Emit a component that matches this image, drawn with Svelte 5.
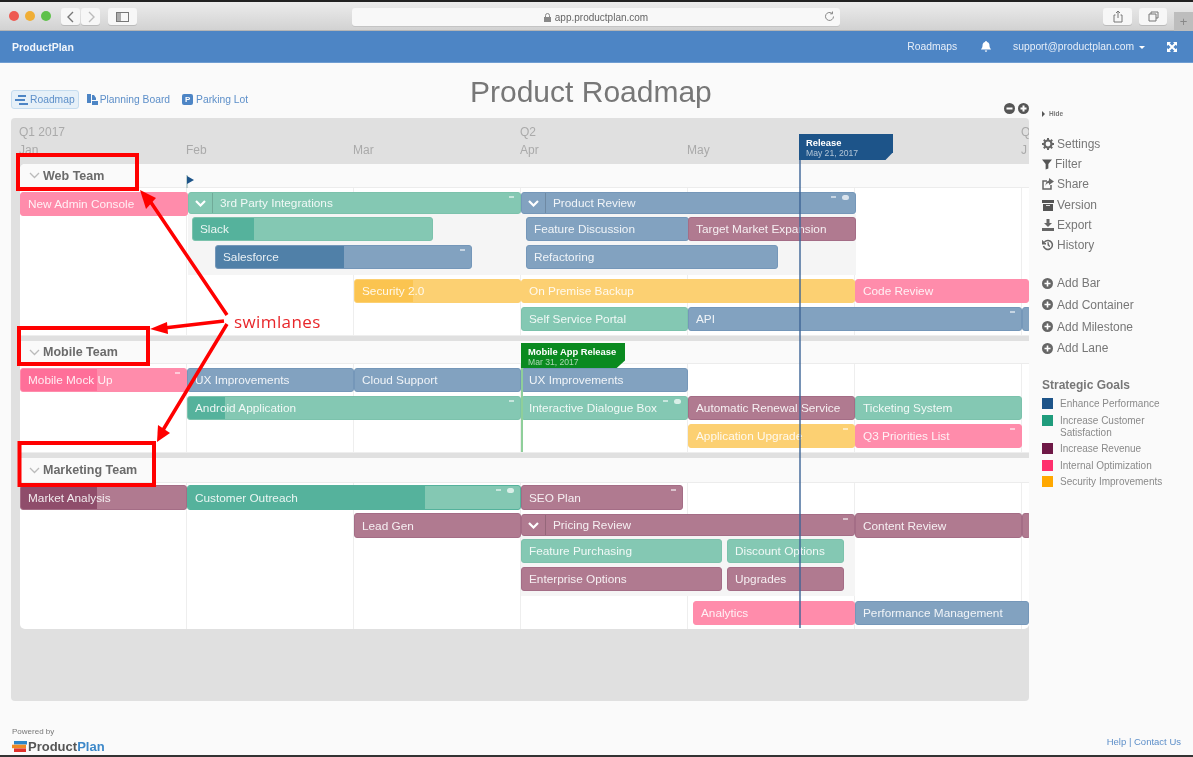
<script>
  const B0 = 20;
  const lanes = [
    { name: 'Web Team', headH: 24, bodyH: 147, top: 188,
      groups: [[188, 521, 214, 275], [521, 856, 214, 275]],
      bars: [
        ['New Admin Console', 20, 188, 192, 24, 'pink'],
        ['3rd Party Integrations', 188, 521, 192, 22, 'teal', 0, 'chev', 'n'],
        ['Slack', 192, 433, 217, 24, 'teal', 253],
        ['Salesforce', 215, 472, 245, 24, 'blue', 343, '', 'n'],
        ['Product Review', 521, 856, 192, 22, 'blue', 0, 'chev', 'nc'],
        ['Feature Discussion', 526, 689, 217, 24, 'blue'],
        ['Target Market Expansion', 688, 856, 217, 24, 'plum'],
        ['Refactoring', 526, 778, 245, 24, 'blue'],
        ['Security 2.0', 354, 521, 279, 24, 'orange', 412],
        ['On Premise Backup', 521, 855, 279, 24, 'orange'],
        ['Code Review', 855, 1029, 279, 24, 'pink'],
        ['Self Service Portal', 521, 688, 307, 24, 'teal'],
        ['API', 688, 1022, 307, 24, 'blue', 0, '', 'n'],
        ['', 1022, 1029, 307, 24, 'blue']
      ] },
    { name: 'Mobile Team', headH: 23, bodyH: 88, top: 364, groups: [],
      bars: [
        ['Mobile Mock Up', 20, 187, 368, 24, 'pink', 96, '', 'n'],
        ['UX Improvements', 187, 354, 368, 24, 'blue'],
        ['Cloud Support', 354, 521, 368, 24, 'blue'],
        ['UX Improvements', 521, 688, 368, 24, 'blue'],
        ['Android Application', 187, 521, 396, 24, 'teal', 224, '', 'n'],
        ['Interactive Dialogue Box', 521, 688, 396, 24, 'teal', 0, '', 'nc'],
        ['Automatic Renewal Service', 688, 855, 396, 24, 'plum'],
        ['Ticketing System', 855, 1022, 396, 24, 'teal'],
        ['Application Upgrade', 688, 855, 424, 24, 'orange', 0, '', 'n'],
        ['Q3 Priorities List', 855, 1022, 424, 24, 'pink', 0, '', 'n']
      ] },
    { name: 'Marketing Team', headH: 25, bodyH: 146, top: 482,
      groups: [[521, 855, 535, 595]],
      bars: [
        ['Market Analysis', 20, 187, 484, 25, 'plum', 96],
        ['Customer Outreach', 187, 521, 484, 25, 'lteal', 424, '', 'nc'],
        ['SEO Plan', 521, 683, 484, 25, 'plum', 0, '', 'n'],
        ['Lead Gen', 354, 521, 512, 25, 'plum'],
        ['Pricing Review', 521, 855, 513, 22, 'plum', 0, 'chev', 'n'],
        ['Content Review', 855, 1022, 512, 25, 'plum'],
        ['', 1022, 1029, 512, 25, 'plum'],
        ['Feature Purchasing', 521, 722, 538, 24, 'teal'],
        ['Discount Options', 727, 844, 538, 24, 'teal'],
        ['Enterprise Options', 521, 722, 566, 24, 'plum'],
        ['Upgrades', 727, 844, 566, 24, 'plum'],
        ['Analytics', 693, 855, 600, 24, 'pink'],
        ['Performance Management', 855, 1029, 600, 24, 'blue']
      ] }
  ];
  const actions = ['Add Bar', 'Add Container', 'Add Milestone', 'Add Lane'];
  const goals = [
    ['Enhance Performance', '#1d5489'],
    ['Increase Customer Satisfaction', '#1f9c7c'],
    ['Increase Revenue', '#6e1846'],
    ['Internal Optimization', '#ff2f6d'],
    ['Security Improvements', '#ffa800']
  ];
</script>

<div class="window">
  <header class="chrome">
    <div class="lights"><i class="red"></i><i class="amber"></i><i class="green"></i></div>
    <div class="btn nav-l"><svg width="10" height="12" viewBox="0 0 10 12"><path d="M7 1 2 6l5 5" fill="none" stroke="#777" stroke-width="1.4"/></svg></div>
    <div class="btn nav-r"><svg width="10" height="12" viewBox="0 0 10 12"><path d="m3 1 5 5-5 5" fill="none" stroke="#bbb" stroke-width="1.4"/></svg></div>
    <div class="btn side"><svg width="13" height="10" viewBox="0 0 13 10"><rect x=".5" y=".5" width="12" height="9" fill="none" stroke="#777"/><rect x="1" y="1" width="4" height="8" fill="#aaa"/></svg></div>
    <div class="url">
      <svg width="7" height="9" viewBox="0 0 7 9"><rect y="4" width="7" height="5" fill="#888"/><path d="M1.500 4V2.500a2 2 0 0 1 4 0V4" fill="none" stroke="#888"/></svg>
      <span>app.productplan.com</span>
      <svg class="reload" width="11" height="11" viewBox="0 0 11 11"><path d="M9.500 5.500a4 4 0 1 1-1.300-3M8.500 .5v2.300H6.200" fill="none" stroke="#888"/></svg>
    </div>
    <div class="btn share"><svg width="10" height="13" viewBox="0 0 10 13"><path d="M2.500 5H1v7h8V5H7.500M5 8V1M3 3l2-2 2 2" fill="none" stroke="#777"/></svg></div>
    <div class="btn tabs"><svg width="11" height="11" viewBox="0 0 11 11"><path d="M3 3V1h7v6H8M1 3h7v7H1z" fill="none" stroke="#777"/></svg></div>
    <div class="plus">+</div>
  </header>

  <nav class="topnav">
    <strong>ProductPlan</strong>
    <span class="roadmaps">Roadmaps</span>
    <svg class="bell" width="10" height="11" viewBox="0 0 10 11"><path d="M5 0a1 1 0 0 1 1 1c2 .5 2.500 2 2.500 4S10 8 10 8.500H0C0 8 1.500 7 1.500 5S2 1.500 4 1a1 1 0 0 1 1-1ZM3.800 9.500h2.400a1.200 1.200 0 0 1-2.400 0Z" fill="#fff"/></svg>
    <span class="email">support@productplan.com</span>
    <span class="caret"></span>
    <svg class="expand" width="10" height="10" viewBox="0 0 10 10"><path d="M1 1l8 8M9 1 1 9" stroke="#fff" stroke-width="2"/><path d="M0 0h4L0 4ZM10 0v4L6 0ZM0 10V6l4 4ZM10 10H6l4-4Z" fill="#fff"/></svg>
  </nav>

  <div class="main">
    <section class="left">
      <div class="toolbar">
        <div class="tabs-row">
          <span class="tab active">
            <svg width="13" height="10" viewBox="0 0 13 10"><path d="M3 1h8M0 5h10M4 9h9" stroke="#4d85c5" stroke-width="2"/></svg>Roadmap
          </span>
          <span class="tab">
            <svg width="11" height="11" viewBox="0 0 11 11"><path d="M0 0h4v9H0ZM5 1h2l2 3v2H5ZM5 7h6v4H5Z" fill="#4d85c5"/></svg>Planning Board
          </span>
          <span class="tab">
            <span class="p">P</span>Parking Lot
          </span>
        </div>
        <h1>Product Roadmap</h1>
        <div class="zoomers">
          <svg width="11" height="11" viewBox="0 0 11 11"><circle cx="5.500" cy="5.500" r="5.500" fill="#555"/><path d="M2.500 5.500h6" stroke="#fff" stroke-width="2"/></svg>
          <svg width="11" height="11" viewBox="0 0 11 11"><circle cx="5.500" cy="5.500" r="5.500" fill="#555"/><path d="M2.500 5.500h6M5.500 2.500v6" stroke="#fff" stroke-width="2"/></svg>
        </div>
      </div>

      <div class="board">
        <div class="timehead">
          <span class="q">Q1 2017</span><span></span><span></span><span class="q">Q2</span><span></span><span></span><span class="q">Q</span>
          <span>Jan</span><span>Feb</span><span>Mar</span><span>Apr</span><span>May</span><span></span><span>J</span>
        </div>

        <div class="lanes">
          {#each lanes as lane, i}
            {#if i > 0}<div class="sep"></div>{/if}
            <div class="lanehead" style="height:{lane.headH}px">
              <svg width="11" height="7" viewBox="0 0 11 7"><path d="m1 1 4.500 4.500L10 1" fill="none" stroke="#bbb" stroke-width="1.300"/></svg>
              <b>{lane.name}</b>
            </div>
            <div class="lanebody" style="height:{lane.bodyH}px">
              {#each lane.groups as g}
                <div class="group" style="left:{g[0] - B0}px;width:{g[1] - g[0]}px;top:{g[2] - lane.top}px;height:{g[3] - g[2]}px"></div>
              {/each}
              {#each lane.bars as b}
                <div class="bar {b[5]}" style="left:{b[1] - B0}px;width:{b[2] - b[1]}px;top:{b[3] - lane.top}px;height:{b[4]}px">
                  {#if b[6]}<span class="prog" style="width:{b[6] - b[1]}px"></span>{/if}
                  {#if b[7] === 'chev'}
                    <span class="chev"><svg width="11" height="7" viewBox="0 0 11 7"><path d="m1 1 4.500 4.500L10 1" fill="none" stroke="#fff" stroke-width="2.200"/></svg></span>
                  {/if}
                  <span class="label">{b[0]}</span>
                  {#if b[8]}
                    <span class="marks">
                      <i class="dash"></i>
                      {#if b[8] === 'nc'}<i class="bubble"></i>{/if}
                    </span>
                  {/if}
                </div>
              {/each}
            </div>
          {/each}
        </div>

        <svg class="tinyflag" width="9" height="13" viewBox="0 0 9 13"><path d="M1 0v13" stroke="#8aa" /><path d="M1 1l7 4-7 4Z" fill="#1d5489"/></svg>
        <div class="ms-line release-line"></div>
        <div class="flag release"><b>Release</b><small>May 21, 2017</small></div>
        <div class="ms-line mobile-line"></div>
        <div class="flag mobile"><b>Mobile App Release</b><small>Mar 31, 2017</small></div>
      </div>
    </section>

    <aside class="side-panel">
      <div class="hide"><span class="tri"></span>Hide</div>
      <ul class="menu">
        <li><svg width="12" height="12" viewBox="0 0 12 12"><circle cx="6" cy="6" r="3.500" fill="none" stroke="#666" stroke-width="2.200"/><path d="M6 0v2M6 10v2M0 6h2M10 6h2M1.800 1.800l1.400 1.400M8.800 8.800l1.400 1.400M10.200 1.800 8.800 3.200M3.200 8.800l-1.400 1.400" stroke="#666" stroke-width="2"/></svg>Settings</li>
        <li><svg width="10" height="12" viewBox="0 0 11 12"><path d="M0 1h11L7 6v5L4 12V6Z" fill="#555"/></svg>Filter</li>
        <li><svg width="12" height="12" viewBox="0 0 12 12"><path d="M9 7v4H1V3h4" fill="none" stroke="#666" stroke-width="1.500"/><path d="M7 0l5 3.500L7 7V5C5 5 4 6 3.500 8c0-3 1-5 3.500-5.500Z" fill="#666"/></svg>Share</li>
        <li><svg width="12" height="12" viewBox="0 0 12 12"><path d="M0 1h12v3H0ZM1 5h10v7H1Z" fill="#555"/><path d="M4 6.500h4" stroke="#ddd"/></svg>Version</li>
        <li><svg width="12" height="12" viewBox="0 0 12 12"><path d="M4.500 0h3v4H10L6 8 2 4h2.500ZM0 9h12v3H0Z" fill="#666"/></svg>Export</li>
        <li><svg width="12" height="12" viewBox="0 0 12 12"><path d="M2.500 3a4.500 4.500 0 1 1-1 4" fill="none" stroke="#666" stroke-width="1.500"/><path d="M0 1.500 4 5H0ZM6 3v3.500l2 1" fill="#666" stroke="#666"/></svg>History</li>
      </ul>
      <ul class="menu adds">
        {#each actions as a}
          <li><svg width="11" height="11" viewBox="0 0 11 11"><circle cx="5.500" cy="5.500" r="5.500" fill="#666"/><path d="M2.500 5.500h6M5.500 2.500v6" stroke="#fff" stroke-width="1.600"/></svg>{a}</li>
        {/each}
      </ul>
      <h2>Strategic Goals</h2>
      <ul class="legend">
        {#each goals as g}
          <li><i style="background:{g[1]}"></i><span>{g[0]}</span></li>
        {/each}
      </ul>
    </aside>
  </div>

  <footer class="foot">
    <div class="powered">
      <small>Powered by</small>
      <div class="logo">
        <svg width="15" height="11" viewBox="0 0 15 11"><rect x="2" y="0" width="13" height="3.500" fill="#2d86c9"/><rect x="0" y="3.700" width="14" height="3.500" fill="#f08a24"/><rect x="2" y="7.400" width="12" height="3.600" fill="#e0322c"/></svg>
        <span class="prod">Product</span><span class="plan">Plan</span>
      </div>
    </div>
    <div class="help">Help | Contact Us</div>
  </footer>

  <svg class="notes" width="1193" height="757" viewBox="0 0 1193 757" aria-hidden="true">
    <g fill="none" stroke="#f00" stroke-width="4">
      <rect x="18" y="155" width="119" height="34"/>
      <rect x="19" y="328" width="129" height="36"/>
      <rect x="19.500" y="443" width="134.500" height="42"/>
      <path d="M227 315 150 201M224 321l-60 7M227 324l-64 106" stroke-width="3.500"/>
    </g>
    <g fill="#f00">
      <path d="m140 190 16 8-10 11Z"/>
      <path d="m150 329 17-7 1 12Z"/>
      <path d="m157 442 1-17 12 8Z"/>
    </g>
    <text x="234" y="328" class="swim">swimlanes</text>
  </svg>
</div>

<style>
  :global(body) { margin: 0; background: #fff; }
  .window {
    position: relative;
    width: 1193px;
    height: 757px;
    overflow: hidden;
    display: flex;
    flex-direction: column;
    background: #fafafa;
    font-family: "Liberation Sans", Arial, sans-serif;
    filter: blur(0.5px);
  }
  ul { list-style: none; margin: 0; padding: 0; }

  .chrome {
    position: relative;
    box-sizing: border-box;
    height: 31px;
    border-top: 2px solid #222;
    border-bottom: 1px solid #b5b5b5;
    background: linear-gradient(#ececec, #d2d2d2);
    flex: none;
  }
  .lights { position: absolute; left: 9px; top: 9px; display: flex; gap: 6px; }
  .lights i { width: 10px; height: 10px; border-radius: 50%; }
  .red { background: #ee5a52; }
  .amber { background: #f0ae35; }
  .green { background: #5fc14a; }
  .btn {
    position: absolute;
    top: 6px;
    height: 17px;
    background: #f7f7f7;
    border-radius: 3px;
    display: flex;
    align-items: center;
    justify-content: center;
    box-shadow: 0 1px 0 #bbb;
  }
  .nav-l { left: 61px; width: 19px; }
  .nav-r { left: 81px; width: 19px; }
  .side { left: 108px; width: 29px; }
  .share { left: 1103px; width: 29px; }
  .tabs { left: 1139px; width: 28px; }
  .url {
    position: absolute;
    left: 352px;
    top: 6px;
    width: 488px;
    height: 18px;
    background: #f8f8f8;
    border-radius: 3px;
    box-shadow: 0 1px 0 #c4c4c4;
    display: flex;
    align-items: center;
    justify-content: center;
    gap: 4px;
    font-size: 10px;
    color: #666;
  }
  .reload { position: absolute; right: 5px; top: 3px; }
  .plus {
    position: absolute;
    left: 1174px;
    top: 10px;
    width: 19px;
    height: 19px;
    background: #bdbdbd;
    color: #888;
    font-size: 13px;
    line-height: 19px;
    text-align: center;
  }

  .topnav {
    position: relative;
    height: 32px;
    flex: none;
    background: #4d85c5;
    color: #fff;
    font-size: 10.300px;
    display: flex;
    align-items: center;
    padding: 0 16px 0 12px;
    border-bottom: 1px solid #6f9dd2;
    box-sizing: border-box;
  }
  .topnav strong { font-size: 10.500px; margin-right: auto; color: #f2f6fb; }
  .roadmaps { color: #e6eef8; }
  .bell { margin: 0 22px 0 24px; }
  .email { color: #e6eef8; }
  .caret {
    margin: 2px 0 0 5px;
    border: 3px solid transparent;
    border-top-color: #fff;
    border-bottom: 0;
  }
  .expand { margin-left: 22px; }

  .main { flex: 1; display: flex; min-height: 0; }
  .left { width: 1018px; margin-left: 11px; flex: none; display: flex; flex-direction: column; }

  .toolbar { height: 55px; flex: none; display: flex; align-items: flex-end; position: relative; }
  .tabs-row { width: 459px; flex: none; display: flex; align-items: center; font-size: 10.300px; color: #5d8fc9; margin-bottom: 9px; }
  .tab { display: flex; align-items: center; gap: 2px; height: 17px; margin-right: 12px; }
  .tab.active {
    background: #e6f0f8;
    border: 1px solid #c5dcef;
    border-radius: 3px;
    padding: 0 3px;
    margin-right: 8px;
  }
  .p {
    width: 11px;
    height: 11px;
    background: #4d85c5;
    color: #fff;
    border-radius: 2px;
    font-size: 8px;
    font-weight: 700;
    text-align: center;
    line-height: 11px;
    margin-right: 1px;
  }
  h1 {
    margin: 0 0 8px;
    font-size: 30px;
    font-weight: 400;
    color: #777;
    line-height: 36px;
    white-space: nowrap;
  }
  .zoomers { margin-left: auto; display: flex; gap: 3px; margin-bottom: 4px; }
  .zoomers svg { display: block; }

  .board {
    position: relative;
    height: 583px;
    flex: none;
    background: #e0e0e0;
    border-radius: 4px;
    overflow: hidden;
    box-sizing: border-box;
    padding-left: 9px;
  }
  .timehead {
    height: 46px;
    margin-left: -1px;
    display: grid;
    grid-template-columns: 167px 167px 167px 167px 167px 167px 1fr;
    grid-template-rows: 22px 24px;
    font-size: 12px;
    color: #aaa;
    overflow: hidden;
    box-sizing: border-box;
  }
  .timehead span { line-height: 1; white-space: nowrap; padding-top: 8px; }
  .timehead span:nth-child(n+8) { padding-top: 4px; }

  .lanes { background: #fff; border-radius: 5px 0 5px 5px; overflow: hidden; }
  .sep { height: 5px; background: #e0e0e0; border-top: 1px solid #eee; }
  .lanehead {
    box-sizing: border-box;
    background: #fafafa;
    border-bottom: 1px solid #ececec;
    display: flex;
    align-items: center;
    gap: 3px;
    padding-left: 9px;
    color: #6b6b6b;
    font-size: 12.500px;
  }
  .lanebody {
    position: relative;
    background-image: linear-gradient(to right, transparent 166px, #eeeeee 166px);
    background-size: 167px 100%;
    overflow: hidden;
  }
  .group { position: absolute; background: #f5f5f5; }
  .bar {
    position: absolute;
    box-sizing: border-box;
    display: flex;
    align-items: center;
    padding-left: 7px;
    border-radius: 3px;
    border: 1px solid;
    color: rgba(255, 255, 255, 0.88);
    font-size: 11.800px;
    overflow: hidden;
    white-space: nowrap;
  }
  .label { position: relative; }
  .prog { position: absolute; left: 0; top: 0; bottom: 0; }
  .pink { background: #ff8cab; border-color: #ff8cab; }
  .pink .prog { background: #ff6f99; }
  .teal { background: #84c8b3; border-color: #7cc2ac; }
  .teal .prog { background: #55b29c; }
  .lteal { background: #84c8b3; border-color: #55b29c; }
  .lteal .prog { background: #55b29c; }
  .blue { background: #82a2c0; border-color: #7597b9; }
  .blue .prog { background: #5080a8; }
  .plum { background: #b07a90; border-color: #a46d86; }
  .plum .prog { background: #8f4d6b; }
  .orange { background: #fcd072; border-color: #fcd072; }
  .orange .prog { background: #fbc450; }
  .chev {
    position: relative;
    width: 23px;
    margin: 0 7px 0 -7px;
    align-self: stretch;
    border-right: 1px solid rgba(0, 0, 0, 0.15);
    display: flex;
    align-items: center;
    justify-content: center;
    flex: none;
  }
  .marks { position: absolute; right: 6px; top: 2px; display: flex; gap: 6px; align-items: flex-start; }
  .dash { width: 5px; height: 2px; margin-top: 1px; background: rgba(255, 255, 255, 0.55); }
  .bubble { width: 7px; height: 5px; border-radius: 3px; background: rgba(255, 255, 255, 0.7); }

  .tinyflag { position: absolute; left: 175px; top: 57px; }
  .ms-line { position: absolute; }
  .release-line { left: 788px; top: 16px; width: 2px; height: 494px; background: rgba(60, 100, 150, 0.7); }
  .mobile-line { left: 509.500px; top: 225px; width: 2px; height: 109px; background: #8fcf9a; }
  .flag {
    position: absolute;
    box-sizing: border-box;
    color: #fff;
    padding: 3px 0 0 7px;
    display: flex;
    flex-direction: column;
    clip-path: polygon(0 0, 100% 0, 100% 70%, 92% 100%, 0 100%);
  }
  .flag b { font-size: 9.400px; line-height: 11px; }
  .flag small { font-size: 8.600px; line-height: 11px; opacity: 0.65; }
  .release { left: 788px; top: 16px; width: 94px; height: 26px; background: #1d5489; }
  .mobile { left: 510px; top: 225px; width: 104px; height: 25px; background: #0a8a20; }

  .side-panel { flex: 1; padding-left: 13px; color: #777; font-size: 12px; }
  .hide { height: 71px; padding-top: 47px; box-sizing: border-box; font-size: 6.500px; font-weight: 700; display: flex; align-items: flex-start; gap: 4px; color: #777; line-height: 8px; }
  .tri { margin-top: 1px; border: 3px solid transparent; border-left-color: #555; border-right: 0; }
  .menu li { display: flex; align-items: center; gap: 3px; height: 20.200px; }
  .menu svg { flex: none; }
  .adds { margin-top: 17px; }
  .adds li { height: 21.800px; gap: 4px; }
  h2 { margin: 17px 0 4px; font-size: 12px; font-weight: 700; color: #777; line-height: 18px; }
  .legend { font-size: 10px; color: #8a8a8a; }
  .legend li { display: flex; gap: 7px; margin-bottom: 4.500px; line-height: 12px; width: 135px; }
  .legend i { width: 11px; height: 11px; flex: none; }

  .foot {
    height: 56px;
    flex: none;
    box-sizing: border-box;
    border-bottom: 2px solid #333;
    padding: 26px 12px 0;
    display: flex;
    justify-content: space-between;
  }
  .powered small { display: block; font-size: 8px; color: #777; line-height: 10px; }
  .logo { display: flex; align-items: center; font-size: 13px; font-weight: 700; line-height: 15px; margin-top: 2px; }
  .logo svg { margin-right: 1px; }
  .prod { color: #555; }
  .plan { color: #3d88c9; }
  .help { font-size: 9.500px; color: #5d8fc9; padding-top: 9px; }

  .notes { position: absolute; left: 0; top: 0; pointer-events: none; }
  .swim { font-family: "Open Sans", sans-serif; font-size: 17px; fill: #e8262a; letter-spacing: 0.4px; }
</style>
